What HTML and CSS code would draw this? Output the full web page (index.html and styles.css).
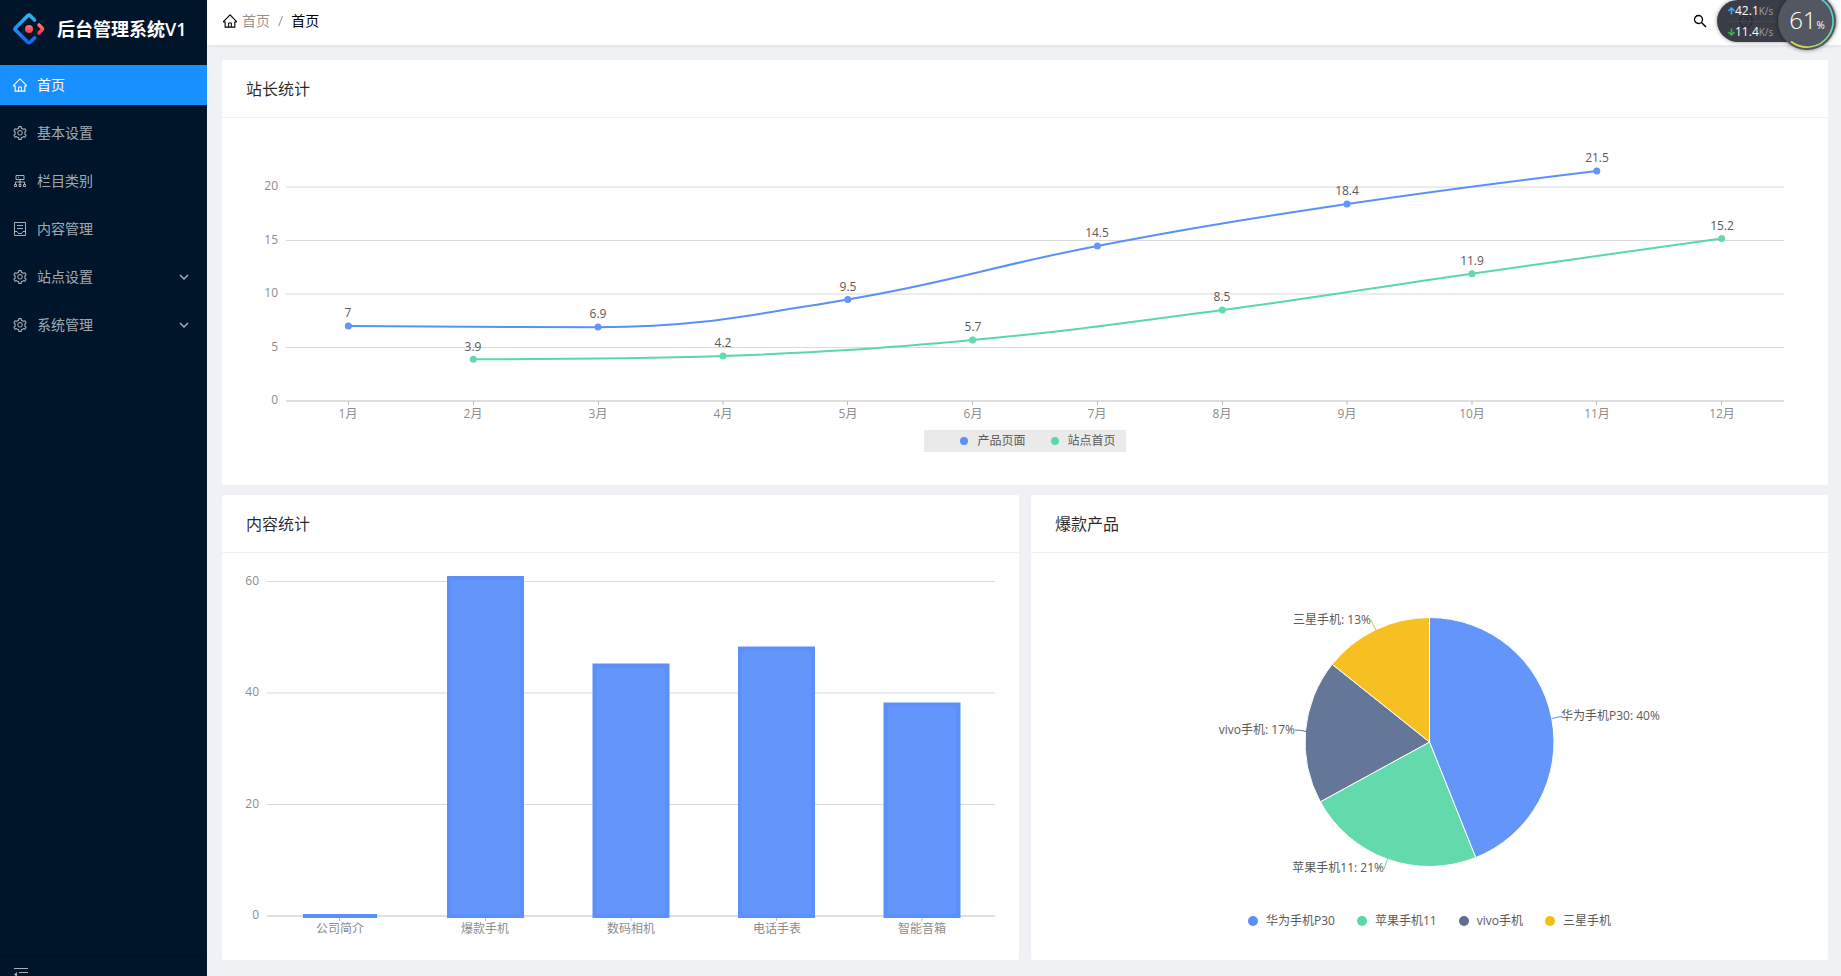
FILE: index.html
```html
<!DOCTYPE html>
<html lang="zh-CN">
<head>
<meta charset="utf-8">
<meta name="viewport" content="width=device-width, initial-scale=1">
<title>后台管理系统V1</title>
<link rel="stylesheet" href="styles.css">
</head>
<body>
<svg class="defs" aria-hidden="true">
  <symbol id="i-home" viewBox="64 64 896 896"><path d="M946.5 505L560.1 118.8l-25.9-25.9a31.5 31.5 0 00-44.4 0L77.5 505a63.9 63.9 0 00-18.8 46c.4 35.2 29.7 63.3 64.9 63.3h42.5V940h691.8V614.3h43.4c17.1 0 33.2-6.7 45.3-18.8a63.6 63.6 0 0018.7-45.3c0-17-6.7-33.1-18.8-45.2zM568 868H456V664h112v204zm217.9-325.7V868H632V640c0-22.1-17.9-40-40-40H432c-22.1 0-40 17.9-40 40v228H238.1V542.3h-96l370-369.7 23.1 23.1L882 542.3h-96.1z"/></symbol>
  <symbol id="i-setting" viewBox="64 64 896 896"><path d="M924.8 625.7l-65.5-56c3.1-19 4.7-38.4 4.7-57.8s-1.6-38.8-4.7-57.8l65.5-56a32.03 32.03 0 009.3-35.2l-.9-2.6a443.74 443.74 0 00-79.7-137.9l-1.8-2.1a32.12 32.12 0 00-35.1-9.5l-81.3 28.9c-30-24.6-63.5-44-99.7-57.6l-15.7-85a32.05 32.05 0 00-25.8-25.7l-2.7-.5c-52.1-9.4-106.9-9.4-159 0l-2.7.5a32.05 32.05 0 00-25.8 25.7l-15.8 85.4a351.86 351.86 0 00-99 57.4l-81.9-29.1a32 32 0 00-35.1 9.5l-1.8 2.1a446.02 446.02 0 00-79.7 137.9l-.9 2.6c-4.5 12.5-.8 26.5 9.3 35.2l66.3 56.6c-3.1 18.8-4.6 38-4.6 57.1 0 19.2 1.5 38.4 4.6 57.1L99 625.5a32.03 32.03 0 00-9.3 35.2l.9 2.6c18.1 50.4 44.9 96.9 79.7 137.9l1.8 2.1a32.12 32.12 0 0035.1 9.5l81.9-29.1c29.8 24.5 63.1 43.9 99 57.4l15.8 85.4a32.05 32.05 0 0025.8 25.7l2.7.5a449.4 449.4 0 00159 0l2.7-.5a32.05 32.05 0 0025.8-25.7l15.7-85a350 350 0 0099.7-57.6l81.3 28.9a32 32 0 0035.1-9.5l1.8-2.1c34.8-41.1 61.6-87.5 79.7-137.9l.9-2.6c4.5-12.3.8-26.3-9.3-35zM788.3 465.9c2.5 15.1 3.8 30.6 3.8 46.1s-1.3 31-3.8 46.1l-6.6 40.1 74.7 63.9a370.03 370.03 0 01-42.6 73.6L721 702.8l-31.4 25.8c-23.9 19.6-50.5 35-79.3 45.8l-38.1 14.3-17.9 97a377.5 377.5 0 01-85 0l-17.9-97.2-37.8-14.5c-28.5-10.8-55-26.2-78.7-45.7l-31.4-25.9-93.4 33.2c-17-22.9-31.2-47.6-42.6-73.6l75.5-64.5-6.5-40c-2.4-14.9-3.7-30.3-3.7-45.5 0-15.3 1.2-30.6 3.7-45.5l6.5-40-75.5-64.5c11.3-26.1 25.6-50.7 42.6-73.6l93.4 33.2 31.4-25.9c23.7-19.5 50.2-34.9 78.7-45.7l37.9-14.3 17.9-97.2c28.1-3.2 56.8-3.2 85 0l17.9 97 38.1 14.3c28.7 10.8 55.4 26.2 79.3 45.8l31.4 25.8 92.8-32.9c17 22.9 31.2 47.6 42.6 73.6L781.8 426l6.5 39.9zM512 326c-97.2 0-176 78.8-176 176s78.8 176 176 176 176-78.8 176-176-78.8-176-176-176zm79.2 255.2A111.6 111.6 0 01512 614c-29.9 0-58-11.7-79.2-32.8A111.6 111.6 0 01400 502c0-29.9 11.7-58 32.8-79.2C454 401.6 482.1 390 512 390c29.9 0 58 11.6 79.2 32.8A111.6 111.6 0 01624 502c0 29.9-11.7 58-32.8 79.2z"/></symbol>
  <symbol id="i-down" viewBox="0 0 10 10"><path d="M1 3l4 4 4-4" fill="none" stroke="currentColor" stroke-width="1.5"/></symbol>
</svg>

<div class="layout">
  <aside class="sider">
    <a class="brand" href="#">
      <svg class="brand-logo" viewBox="0 0 32 32" aria-hidden="true">
        <defs>
          <linearGradient id="blue" x1="0" y1="0" x2="0" y2="1"><stop offset="0" stop-color="#2db4f5"/><stop offset="1" stop-color="#1268ef"/></linearGradient>
          <linearGradient id="red" x1="0" y1="0" x2="0" y2="1"><stop offset="0" stop-color="#fa7572"/><stop offset="1" stop-color="#ef3a4b"/></linearGradient>
        </defs>
        <path d="M21.500 7L17.500 3Q16 1.500 14.500 3L2.500 15Q1.500 16 2.500 17L14.500 29Q16 30.500 17.500 29L21.500 25" fill="none" stroke="url(#blue)" stroke-width="3.600" stroke-linecap="round" stroke-linejoin="round"/>
        <path d="M26 12L29 15Q30 16 29 17L26 20" fill="none" stroke="url(#red)" stroke-width="3.600" stroke-linecap="round" stroke-linejoin="round"/>
        <circle cx="16" cy="16" r="4" fill="url(#red)"/>
      </svg>
      <span class="brand-name">后台管理系统V1</span>
    </a>
    <nav class="menu" aria-label="主菜单">
      <a class="menu-item menu-item-active" href="#"><svg class="icon" aria-hidden="true"><use href="#i-home"/></svg><span>首页</span></a>
      <a class="menu-item" href="#"><svg class="icon" aria-hidden="true"><use href="#i-setting"/></svg><span>基本设置</span></a>
      <a class="menu-item" href="#">
        <svg class="icon" viewBox="0 0 14 14" aria-hidden="true"><path d="M3 1.500h8v4H3zM7 5.500v2.500M2.500 10V8h9v2M7 8v2M1.500 10.500h2v2h-2zM6 10.500h2v2H6zM10.500 10.500h2v2h-2zM5 3.500h1" fill="none" stroke="currentColor"/></svg>
        <span>栏目类别</span></a>
      <a class="menu-item" href="#">
        <svg class="icon" viewBox="0 0 14 14" aria-hidden="true"><path d="M1.500.500h11v13h-11zM4 3.500h6M4 6.500h6M1.500 9.500H4l1.500 2h3l1.500-2h2.500" fill="none" stroke="currentColor"/></svg>
        <span>内容管理</span></a>
      <button class="menu-item" type="button" aria-expanded="false"><svg class="icon" aria-hidden="true"><use href="#i-setting"/></svg><span>站点设置</span><svg class="icon-arrow" aria-hidden="true"><use href="#i-down"/></svg></button>
      <button class="menu-item" type="button" aria-expanded="false"><svg class="icon" aria-hidden="true"><use href="#i-setting"/></svg><span>系统管理</span><svg class="icon-arrow" aria-hidden="true"><use href="#i-down"/></svg></button>
    </nav>
    <button class="fold" type="button" aria-label="收起菜单">
      <svg class="icon" viewBox="0 0 14 14" aria-hidden="true"><path d="M0 .500h14M5 4.500h9M5 8.500h9M0 12.500h14" fill="none" stroke="currentColor"/><path d="M3 4v5L0 6.500z"/></svg>
    </button>
  </aside>

  <div class="page">
    <header class="topbar">
      <nav class="crumbs" aria-label="面包屑">
        <svg class="icon" aria-hidden="true"><use href="#i-home"/></svg>
        <a class="crumb-link" href="#">首页</a>
        <span class="crumb-sep">/</span>
        <span>首页</span>
      </nav>
      <button class="search" type="button" aria-label="搜索">
        <svg class="icon" viewBox="0 0 14 14" aria-hidden="true"><circle cx="5.500" cy="5.500" r="4" fill="none" stroke="currentColor" stroke-width="1.300"/><path d="M8.500 8.500l4.500 4.500" stroke="currentColor" stroke-width="1.500"/></svg>
      </button>
    </header>

    <main class="content">
      <section class="card card-wide">
        <h2 class="card-title">站长统计</h2>
        <svg class="chart" viewBox="0 0 1606 312" role="img" aria-label="站长统计折线图">
          <path class="grid" d="M64 69H1562M64 122.500H1562M64 176H1562M64 229.500H1562"/>
          <path class="axis" d="M64 283H1562"/>
          <path class="tick" d="M126.500 283v4M251.500 283v4M376.500 283v4M501 283v4M625.500 283v4M750.500 283v4M875.500 283v4M1000.500 283v4M1125 283v4M1250 283v4M1374.500 283v4M1499.500 283v4"/>
          <g class="label label-end">
            <text x="56" y="72">20</text><text x="56" y="126">15</text><text x="56" y="179">10</text><text x="56" y="233">5</text><text x="56" y="286">0</text>
          </g>
          <g class="label label-mid">
            <text x="126" y="300">1月</text><text x="251" y="300">2月</text><text x="376" y="300">3月</text><text x="501" y="300">4月</text><text x="626" y="300">5月</text><text x="751" y="300">6月</text><text x="875" y="300">7月</text><text x="1000" y="300">8月</text><text x="1125" y="300">9月</text><text x="1250" y="300">10月</text><text x="1375" y="300">11月</text><text x="1500" y="300">12月</text>
          </g>
          <path class="line stroke-blue" d="M126.400 208.100C126.400 208.100 276.200 209.200 376.100 209.200C476 209.200 525.900 197.600 625.800 181.400C725.700 165.100 775.500 146.900 875.400 127.900C975.300 108.800 1025.200 101.100 1125.100 86.100C1225 71.100 1374.800 53 1374.800 53"/>
          <path class="line stroke-green" d="M251.300 241.300C251.300 241.300 401 241.300 500.900 238.100C600.800 234.200 650.700 231.200 750.600 222C850.500 212.800 900.400 205.300 1000.300 192C1100.200 178.700 1150 170 1249.900 155.700C1349.800 141.400 1499.600 120.400 1499.600 120.400"/>
          <g class="fill-blue">
            <circle cx="126.400" cy="208" r="3.500"/><circle cx="376" cy="209" r="3.500"/><circle cx="625.800" cy="181.400" r="3.500"/><circle cx="875.400" cy="127.900" r="3.500"/><circle cx="1125" cy="86" r="3.500"/><circle cx="1374.800" cy="53" r="3.500"/>
          </g>
          <g class="fill-green">
            <circle cx="251.300" cy="241.300" r="3.500"/><circle cx="501" cy="238" r="3.500"/><circle cx="750.600" cy="222" r="3.500"/><circle cx="1000.300" cy="192" r="3.500"/><circle cx="1250" cy="155.700" r="3.500"/><circle cx="1499.600" cy="120.400" r="3.500"/>
          </g>
          <g class="label label-mid label-dark">
            <text x="126" y="199">7</text><text x="376" y="200">6.9</text><text x="626" y="173">9.5</text><text x="875" y="119">14.5</text><text x="1125" y="77">18.4</text><text x="1375" y="44">21.5</text>
            <text x="251" y="233">3.9</text><text x="501" y="229">4.2</text><text x="751" y="213">5.7</text><text x="1000" y="183">8.5</text><text x="1250" y="147">11.9</text><text x="1500" y="112">15.2</text>
          </g>
        </svg>
        <ul class="legend legend-boxed">
          <li class="legend-item"><i class="dot dot-small bg-blue"></i>产品页面</li>
          <li class="legend-item"><i class="dot dot-small bg-green"></i>站点首页</li>
        </ul>
      </section>

      <section class="card">
        <h2 class="card-title">内容统计</h2>
        <svg class="chart" viewBox="0 0 797 407" role="img" aria-label="内容统计柱状图">
          <path class="grid" d="M45 28.500H773M45 140H773M45 251.500H773"/>
          <path class="axis" d="M45 363H773"/>
          <path class="tick" d="M117.500 363v5M263.500 363v5M409 363v5M554.500 363v5M700 363v5"/>
          <path class="bar-flat" d="M81 363h74"/>
          <g class="bar">
            <rect x="227" y="25" width="73" height="338"/><rect x="372.500" y="112.500" width="73" height="250.500"/><rect x="518" y="95.500" width="73" height="267.500"/><rect x="663.500" y="151.500" width="73" height="211.500"/>
          </g>
          <g class="label label-end">
            <text x="37" y="32">60</text><text x="37" y="143">40</text><text x="37" y="255">20</text><text x="37" y="366">0</text>
          </g>
          <g class="label label-mid">
            <text x="118" y="380">公司简介</text><text x="263" y="380">爆款手机</text><text x="409" y="380">数码相机</text><text x="555" y="380">电话手表</text><text x="700" y="380">智能音箱</text>
          </g>
        </svg>
      </section>

      <section class="card">
        <h2 class="card-title">爆款产品</h2>
        <svg class="chart" viewBox="0 0 797 357" role="img" aria-label="爆款产品饼图">
          <g class="slice">
            <path class="fill-blue" d="M398.500 189V64.500A124.500 124.500 0 0 1 444.700 304.600z"/>
            <path class="fill-green" d="M398.500 189L444.700 304.600A124.500 124.500 0 0 1 289.300 248.800z"/>
            <path class="fill-slate" d="M398.500 189L289.300 248.800A124.500 124.500 0 0 1 301.200 111.300z"/>
            <path class="fill-gold" d="M398.500 189L301.200 111.300A124.500 124.500 0 0 1 398.500 64.500z"/>
          </g>
          <path class="leader stroke-blue" d="M521 165.500Q526 164 531 163.500"/>
          <path class="leader stroke-green" d="M356.500 306L353 316"/>
          <path class="leader stroke-slate" d="M275 178.500Q270 177 264 177"/>
          <path class="leader stroke-gold" d="M345 77L340 67"/>
          <g class="label label-dark">
            <text x="530" y="167">华为手机P30: 40%</text>
          </g>
          <g class="label label-dark label-end">
            <text x="340" y="71">三星手机: 13%</text><text x="264" y="181">vivo手机: 17%</text><text x="353" y="319">苹果手机11: 21%</text>
          </g>
        </svg>
        <ul class="legend">
          <li class="legend-item"><i class="dot bg-blue"></i>华为手机P30</li>
          <li class="legend-item"><i class="dot bg-green"></i>苹果手机11</li>
          <li class="legend-item"><i class="dot bg-slate"></i>vivo手机</li>
          <li class="legend-item"><i class="dot bg-gold"></i>三星手机</li>
        </ul>
      </section>
    </main>
  </div>
</div>

<div class="monitor">
  <svg class="monitor-help" viewBox="0 0 14 14" aria-hidden="true"><circle cx="7" cy="7" r="6.300" fill="none" stroke="currentColor"/><path d="M5 5.500a2 2 0 1 1 2.800 1.800Q7 7.700 7 8.600M7 9.800v1.200" fill="none" stroke="currentColor"/></svg>
  <div class="speeds">
    <div class="speed"><svg class="speed-arrow arrow-up" viewBox="0 0 7 8" aria-hidden="true"><path d="M3.500 7.500V2M.500 4l3-3 3 3" fill="none" stroke="currentColor" stroke-width="1.600"/></svg><span class="speed-num">42.1</span><span class="speed-unit">K/s</span></div>
    <div class="speed"><svg class="speed-arrow arrow-down" viewBox="0 0 7 8" aria-hidden="true"><path d="M3.500 .500v5.500M.500 4l3 3 3-3" fill="none" stroke="currentColor" stroke-width="1.600"/></svg><span class="speed-num">11.4</span><span class="speed-unit">K/s</span></div>
  </div>
  <div class="gauge">
    <svg class="gauge-ring" viewBox="0 0 58 58" aria-hidden="true">
      <defs><linearGradient id="ring" x1="1" y1="0" x2="0" y2="1"><stop offset="0" stop-color="#3fd0e8"/><stop offset=".55" stop-color="#8fdc8a"/><stop offset="1" stop-color="#f0d43c"/></linearGradient></defs>
      <path d="M42 6.500A26 26 0 1 1 13 49.500" fill="none" stroke="url(#ring)" stroke-width="1.600"/>
    </svg>
    <span class="gauge-value">61</span><span class="gauge-unit">%</span>
  </div>
</div>
</body>
</html>
```

FILE: styles.css
```css
* {
  box-sizing: border-box;
}

body {
  margin: 0;
  background: #f0f1f5;
  color: rgba(0, 0, 0, 0.85);
  font: 14px/22px "Open Sans", "Noto Sans CJK SC", sans-serif;
}

a {
  color: inherit;
  text-decoration: none;
}

button {
  border: 0;
  padding: 0;
  background: none;
  color: inherit;
  font: inherit;
  cursor: pointer;
}

.defs {
  display: none;
}

.icon {
  flex: none;
  width: 14px;
  height: 14px;
  fill: currentColor;
}

.layout {
  display: flex;
  min-height: 100vh;
}

/* Sidebar */
.sider {
  position: sticky;
  top: 0;
  display: flex;
  flex: none;
  flex-direction: column;
  width: 207px;
  height: 100vh;
  background: #001529;
  color: rgba(255, 255, 255, 0.65);
}

.brand {
  display: flex;
  align-items: center;
  gap: 12px;
  height: 57px;
  padding: 0 13px;
  color: #fff;
}

.brand-logo {
  flex: none;
  width: 32px;
  height: 32px;
}

.brand-name {
  font-size: 18px;
  font-weight: 600;
  white-space: nowrap;
}

.menu {
  display: flex;
  flex: 1;
  flex-direction: column;
  gap: 8px;
  padding-top: 8px;
}

.menu-item {
  display: flex;
  align-items: center;
  gap: 10px;
  width: 100%;
  height: 40px;
  padding: 0 18px 0 13px;
  white-space: nowrap;
}

.menu-item-active {
  background: #1890ff;
  color: #fff;
}

.icon-arrow {
  width: 10px;
  height: 10px;
  margin-left: auto;
}

.fold {
  display: flex;
  flex: none;
  height: 20px;
  padding: 11px 14px 0;
  border-top: 1px solid #00101f;
  overflow: hidden;
}

/* Top bar */
.page {
  flex: 1;
  min-width: 0;
}

.topbar {
  display: flex;
  align-items: center;
  justify-content: space-between;
  height: 45px;
  padding: 0 134px 3px 16px;
  background: #fff;
  box-shadow: 0 1px 4px rgba(0, 21, 41, 0.08);
  color: #000;
}

.crumbs {
  display: flex;
  align-items: center;
  gap: 5px;
}

.crumb-link {
  color: rgba(0, 0, 0, 0.45);
}

.crumb-sep {
  padding: 0 3px;
  color: rgba(0, 0, 0, 0.45);
}

.search {
  display: flex;
}

/* Cards */
.content {
  display: grid;
  grid-template-columns: 1fr 1fr;
  gap: 10px 12px;
  padding: 15px 13px 16px 15px;
}

.card {
  min-width: 0;
  border-radius: 2px;
  background: #fff;
}

.card-wide {
  grid-column: 1 / -1;
  padding-bottom: 33px;
}

.card-title {
  margin: 0;
  padding: 17px 24px 15px;
  border-bottom: 1px solid #f0f0f0;
  font-size: 16px;
  font-weight: 400;
  line-height: 25px;
}

/* Charts */
.chart {
  display: block;
  width: 100%;
  height: auto;
}

.grid {
  stroke: #d9d9d9;
}

.axis,
.tick {
  stroke: #bfbfbf;
}

.label {
  fill: #8c8c8c;
  font-size: 12px;
}

.label-dark {
  fill: #595959;
}

.label-mid {
  text-anchor: middle;
}

.label-end {
  text-anchor: end;
}

.line {
  fill: none;
  stroke-width: 2;
}

.leader {
  fill: none;
}

.bar {
  fill: #6395fa;
  stroke: #5b8ff9;
  stroke-width: 4;
}

.bar-flat {
  stroke: #5b8ff9;
  stroke-width: 4;
}

.slice {
  stroke: #fff;
}

.fill-blue { fill: #6395fa; }
.fill-green { fill: #63daab; }
.fill-slate { fill: #657798; }
.fill-gold { fill: #f6c022; }

.stroke-blue { stroke: #5b8ff9; }
.stroke-green { stroke: #5ad8a6; }
.stroke-slate { stroke: #5d7092; }
.stroke-gold { stroke: #f6bd16; }

.legend {
  display: flex;
  justify-content: center;
  gap: 22px;
  margin: 0;
  padding: 0;
  color: #595959;
  font-size: 12px;
  list-style: none;
}

.legend-boxed {
  gap: 25px;
  width: fit-content;
  margin: 0 auto;
  padding: 0 10px 0 36px;
  background: #eaeaea;
}

.legend-item {
  display: flex;
  align-items: center;
  gap: 8px;
  white-space: nowrap;
}

.legend-boxed .legend-item {
  gap: 9px;
}

.dot {
  width: 10px;
  height: 10px;
  border-radius: 50%;
}

.dot-small {
  width: 8px;
  height: 8px;
}

.bg-blue { background: #5b8ff9; }
.bg-green { background: #5ad8a6; }
.bg-slate { background: #5d7092; }
.bg-gold { background: #f6bd16; }

/* Floating network monitor */
.monitor {
  position: absolute;
  top: 0;
  right: 6px;
  width: 118px;
  height: 42px;
  border-radius: 21px;
  background: #3a3d47;
  box-shadow: 0 0 4px rgba(0, 0, 0, 0.4);
  color: #fff;
}

.monitor-help {
  position: absolute;
  top: 14px;
  left: 22px;
  width: 14px;
  height: 14px;
  color: #202228;
}

.speeds {
  position: relative;
  display: grid;
  grid-template-rows: 1fr 1fr;
  height: 42px;
  padding-left: 11px;
  font-size: 12px;
  line-height: 20px;
}

.speed {
  display: flex;
  align-items: center;
}

.speed + .speed {
  border-top: 1px solid #444751;
}

.speed-arrow {
  width: 7px;
  height: 8px;
}

.arrow-up {
  color: #3fa9f5;
}

.arrow-down {
  color: #35b34a;
}

.speed-unit {
  color: #9a9da5;
  font-size: 10px;
}

.gauge {
  position: absolute;
  top: -8px;
  right: -1px;
  display: flex;
  align-items: center;
  justify-content: center;
  width: 58px;
  height: 58px;
  padding-bottom: 2px;
  border-radius: 50%;
  background: #535762;
  box-shadow: 0 0 4px rgba(0, 0, 0, 0.5);
}

.gauge-ring {
  position: absolute;
  inset: 0;
}

.gauge-value {
  font-size: 24px;
  font-weight: 300;
}

.gauge-unit {
  padding-top: 10px;
  font-size: 10px;
}
```
